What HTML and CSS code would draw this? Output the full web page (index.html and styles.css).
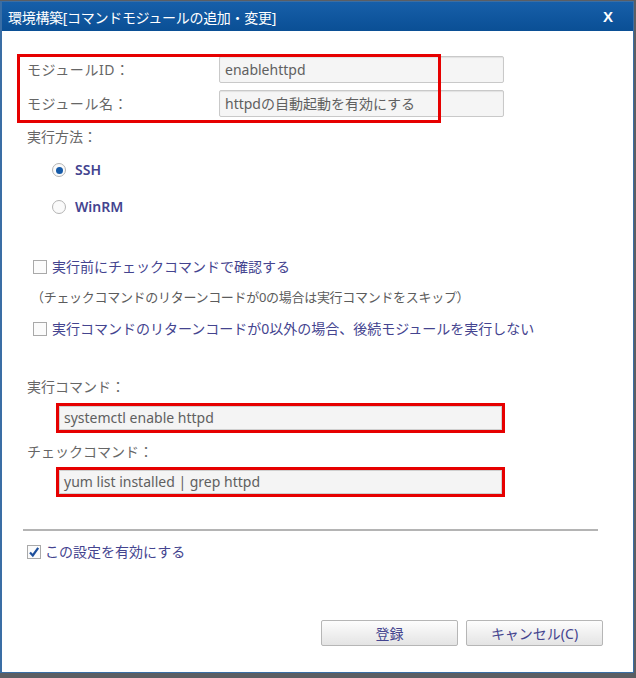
FILE: index.html
```html
<!DOCTYPE html>
<html lang="ja">
<head>
  <meta charset="UTF-8" />
  <title>環境構築[コマンドモジュールの追加・変更]</title>
  <link rel="stylesheet" href="styles.css">
</head>
<body>
  <div class="dialog">
    <div class="titlebar">
      <span class="title">環境構築[コマンドモジュールの追加・変更]</span>
      <span class="close">X</span>
    </div>

    <div class="content">
      <!-- 注釈の赤枠 -->
      <div class="mark mark-top"></div>

      <div class="field-row row-id">
        <label class="field-label">モジュールID：</label>
        <div class="text-input">enablehttpd</div>
      </div>
      <div class="field-row row-name">
        <label class="field-label">モジュール名：</label>
        <div class="text-input">httpdの自動起動を有効にする</div>
      </div>

      <div class="label method-label">実行方法：</div>
      <div class="radio-row row-ssh">
        <span class="radio checked"></span>
        <span class="option-text">SSH</span>
      </div>
      <div class="radio-row row-winrm">
        <span class="radio"></span>
        <span class="option-text">WinRM</span>
      </div>

      <div class="check-row row-check1">
        <span class="checkbox"></span>
        <span class="check-text">実行前にチェックコマンドで確認する</span>
      </div>
      <div class="note">（チェックコマンドのリターンコードが0の場合は実行コマンドをスキップ）</div>
      <div class="check-row row-check2">
        <span class="checkbox"></span>
        <span class="check-text">実行コマンドのリターンコードが0以外の場合、後続モジュールを実行しない</span>
      </div>

      <div class="label cmd-label">実行コマンド：</div>
      <div class="cmd-box row-cmd">
        <div class="cmd-input">systemctl enable httpd</div>
      </div>
      <div class="label check-label">チェックコマンド：</div>
      <div class="cmd-box row-checkcmd">
        <div class="cmd-input">yum list installed | grep httpd</div>
      </div>

      <hr class="separator">

      <div class="check-row row-enable">
        <span class="checkbox checked">
          <svg width="12" height="12" viewBox="0 0 12 12">
            <path d="M2 6.5 L4.8 9.5 L10.2 1.8" fill="none" stroke="#1d4f9c" stroke-width="2.2"/>
          </svg>
        </span>
        <span class="check-text">この設定を有効にする</span>
      </div>

      <div class="buttons">
        <button class="btn">登録</button>
        <button class="btn">キャンセル(C)</button>
      </div>
    </div>
  </div>
</body>
</html>
```

FILE: styles.css
```css
html {
  background: #5b5e63;
}

body {
  margin: 0;
  font-family: "Noto Sans", "Noto Sans CJK JP", sans-serif;
  font-size: 14px;
  color: #666;
}

.dialog {
  width: 631px;
  height: 670px;
  margin-top: 1px;
  border: 1px solid #3a6ea5;
  border-left-width: 2px;
  background: #fff;
}

.titlebar {
  height: 29px;
  display: flex;
  align-items: center;
  justify-content: space-between;
  padding: 0 20px 0 6px;
  background: linear-gradient(#175fa9, #0a4f95);
  color: #fff;
}

.title {
  font-size: 14px;
  letter-spacing: -0.3px;
}

.close {
  font-family: "Liberation Sans", sans-serif;
  font-weight: bold;
  font-size: 15px;
}

.content {
  position: relative;
  padding: 25px 30px 0 25px;
}

.mark {
  position: absolute;
  border: 3px solid #e60000;
}

.mark-top {
  left: 15px;
  top: 23px;
  width: 418px;
  height: 63px;
}

.field-row {
  display: flex;
  align-items: center;
  height: 27px;
}

.row-name { margin-top: 7px; }

.field-label {
  width: 192px;
  line-height: 20px;
  letter-spacing: 0.6px;
}

.text-input {
  width: 275px;
  height: 25px;
  line-height: 25px;
  padding: 0 3px 0 5px;
  border: 1px solid #c9c9c9;
  border-radius: 2px;
  background: #f5f5f5;
  box-shadow: inset 0 1px 1px #e2e2e2;
  color: #606060;
}

.label {
  line-height: 20px;
}

.method-label { margin-top: 10px; }
.cmd-label { margin-top: 38px; }
.check-label { margin-top: 9px; }

.radio-row,
.check-row {
  display: flex;
  align-items: center;
  height: 20px;
  line-height: 20px;
}

.radio-row {
  margin-left: 25px;
  gap: 9px;
}

.row-ssh { margin-top: 13px; }
.row-winrm { margin-top: 17px; }

.radio {
  width: 12px;
  height: 12px;
  border: 1px solid #b4b4b4;
  border-radius: 50%;
  background: #fafafa;
  display: flex;
  align-items: center;
  justify-content: center;
}

.radio.checked::after {
  content: "";
  width: 7px;
  height: 7px;
  border-radius: 50%;
  background: #155aa8;
}

.option-text,
.check-text {
  color: #44448f;
}

.option-text {
  font-weight: 600;
}

.check-row {
  margin-left: 6px;
  gap: 5px;
}

.row-check1 { margin-top: 40px; }
.row-check2 { margin-top: 12px; }

.checkbox {
  width: 12px;
  height: 12px;
  border: 1px solid #a9a9a9;
  background: #fbfbfb;
  display: flex;
  align-items: center;
  justify-content: center;
}

.note {
  margin: 10px 0 0 4px;
  font-size: 13px;
  line-height: 20px;
  color: #5c5c5c;
  letter-spacing: -0.3px;
}

.cmd-box {
  width: 443px;
  margin-left: 29px;
  border: 3px solid #e60000;
}

.row-cmd { margin-top: 6px; }
.row-checkcmd { margin-top: 5px; }

.cmd-input {
  height: 22px;
  line-height: 22px;
  padding-left: 4px;
  border: 1px solid #cfcfcf;
  background: #f4f4f4;
  color: #606060;
}

.separator {
  margin: 32px 0 0 -4px;
  width: 575px;
  height: 0;
  border: none;
  border-top: 2px solid #b4b4b4;
}

.row-enable {
  margin: 11px 0 0 0;
  gap: 4px;
}

.buttons {
  display: flex;
  justify-content: flex-end;
  gap: 8px;
  margin-top: 58px;
}

.btn {
  width: 137px;
  height: 26px;
  padding: 0;
  border: 1px solid #b6b6b6;
  border-radius: 2px;
  background: linear-gradient(#fdfdfd, #e4e4e4);
  font-family: "Noto Sans", "Noto Sans CJK JP", sans-serif;
  font-size: 14px;
  color: #44448f;
}
```
